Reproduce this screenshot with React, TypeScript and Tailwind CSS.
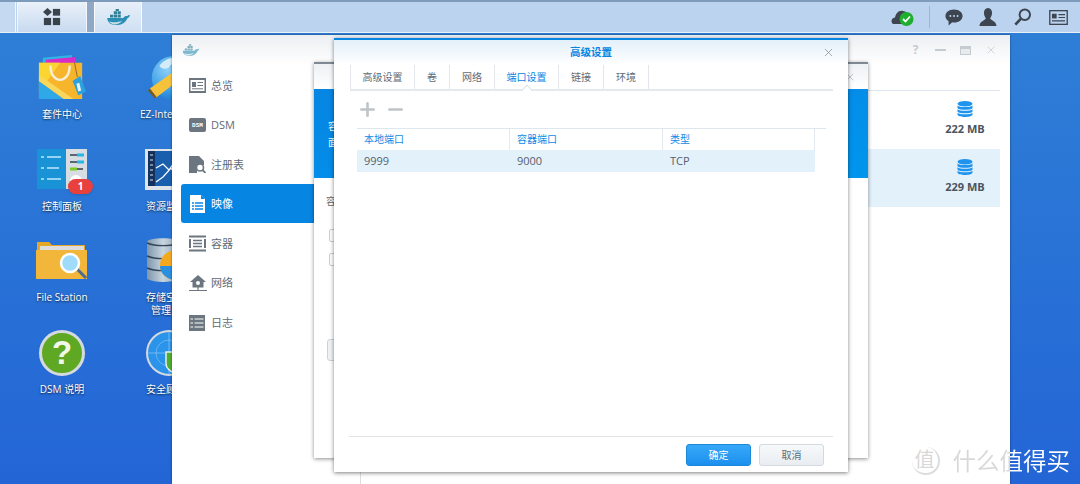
import { Minus, Plus, X } from "lucide-react";
import type { ReactNode } from "react";

function Whale({ className }: { className?: string }) {
  return (
    <svg viewBox="0 0 26 18" className={className}>
      <path d="M1 9.500h17c1-2 3-2.500 4.500-2 .5-1 1.500-1.500 2.500-1-.3 1.500-1 2.500-2.500 3.200C20.500 14.500 16 17 10.500 17 4.500 17 1.500 14 1 9.500z" fill="#2b8fb5" />
      <path d="M3 13c3 1.500 9 1.500 14-.5-2.500 3-6 4-9 3.800-2-.3-4-1.500-5-3.300z" fill="#c9dfe6" />
      <path d="M4 6h3.400v3H4zM8 6h3.400v3H8zM12 6h3.400v3H12zM8 2.500h3.400v3H8zM12 2.500h3.400v3H12zM10 0h3.400v2.200H10z" fill="#2f7f96" />
    </svg>
  );
}

function BagIcon() {
  return (
    <svg viewBox="0 0 50 50" className="h-[48px] w-[48px]">
      <path d="M5 4l30-3 2 8H5z" fill="#32b5e5" />
      <path d="M8 6l31-3 1 7H8z" fill="#d82cc8" />
      <path d="M1 9h45v38H1z" fill="#f7b52c" />
      <path d="M1 9h22L1 40z" fill="#fbd532" />
      <path d="M1 47V28l26 19z" fill="#2fa8e8" />
      <path d="M27 47L1 28v-6l36 25z" fill="#f9d75c" />
      <path d="M13 12c0 20 20 20 20 0" fill="none" stroke="#f6eed8" strokeWidth="2.500" />
      <path d="M36 28l8-5 6 16-8 4z" fill="#2ba2df" />
      <path d="M40 31l3-1 2 8-3 1z" fill="#e6f4fb" />
      <path d="M38 9l3 15" stroke="#8a6a2c" strokeWidth="1" />
    </svg>
  );
}

function GlobeIcon() {
  return (
    <svg viewBox="0 0 50 50" className="ml-[8px] h-[48px] w-[48px]">
      <defs>
        <radialGradient id="globe" cx="0.35" cy="0.3" r="0.8">
          <stop offset="0" stopColor="#8fd0f6" />
          <stop offset="0.6" stopColor="#3a9ee8" />
          <stop offset="1" stopColor="#1670c4" />
        </radialGradient>
      </defs>
      <circle cx="29" cy="25" r="23" fill="url(#globe)" />
      <path d="M14 12c6-7 14-9 20-8-2 6-8 5-10 10-4 2-8 2-10-2zM32 36c4-2 10-2 13-1-3 6-8 10-13 11-2-4-2-7 0-10z" fill="#d2ecfa" />
      <path d="M4 36L42 9l6 8L11 45z" fill="#f5c33b" />
      <path d="M4 36l7 9-2 1-7-8z" fill="#7a5a1c" />
    </svg>
  );
}

function PanelIcon() {
  return (
    <svg viewBox="0 0 50 44" className="h-[44px] w-[50px]">
      <rect x="0" y="1" width="29" height="40" fill="#1a93d6" />
      <rect x="29" y="1" width="21" height="40" fill="#d7dde2" />
      <path d="M4 9h3M10 9h14M4 20h3M10 20h12M4 31h3M10 31h14" stroke="#bfe9fb" strokeWidth="1.500" />
      <path d="M33 7h13M33 14h13M33 21h13" stroke="#5c6670" strokeWidth="2" />
      <path d="M40 7h7M40 14h7" stroke="#25b7e8" strokeWidth="3" />
      <path d="M33 21h7" stroke="#7ecb2b" strokeWidth="3" />
      <circle cx="39" cy="33" r="6" fill="#fff" />
    </svg>
  );
}

function MonitorIcon() {
  return (
    <svg viewBox="0 0 50 44" className="ml-[8px] h-[44px] w-[50px]">
      <rect x="0" y="1" width="50" height="41" fill="#dfe4e8" />
      <rect x="3" y="3" width="44" height="35" fill="#1a5eae" />
      <rect x="3" y="3" width="7" height="35" fill="#12315c" />
      <path d="M5 7h3M5 12h3M5 17h3M5 22h3M5 27h3M5 32h3" stroke="#dfe4e8" strokeWidth="1" />
      <path d="M11 20l7-4 6 6 7-10 8 8 8-6M11 34l7-5 8-9 7 11 8-9 6 5" fill="none" stroke="#fff" strokeWidth="1.200" />
    </svg>
  );
}

function FolderIcon() {
  return (
    <svg viewBox="0 0 52 44" className="h-[44px] w-[52px]">
      <path d="M1 3h12l3 3h33v34H1z" fill="#e6a728" />
      <rect x="4" y="7" width="44" height="4" fill="#ddd" />
      <path d="M0 11h51v29H0z" fill="#f1b63a" />
      <path d="M40 29l10 10" stroke="#4b6d8f" strokeWidth="3" />
      <circle cx="34" cy="24" r="9" fill="#9fdcfb" stroke="#fff" strokeWidth="2.500" />
    </svg>
  );
}

function StorageIcon() {
  return (
    <svg viewBox="0 0 50 46" className="ml-[8px] h-[46px] w-[50px]">
      <defs>
        <linearGradient id="disk" x1="0" x2="1" y1="0" y2="0">
          <stop offset="0" stopColor="#7f97ab" />
          <stop offset="0.5" stopColor="#c7d5df" />
          <stop offset="1" stopColor="#8da3b5" />
        </linearGradient>
      </defs>
      <path d="M2 4c0-5 32-5 32 0v37c-8 4-24 4-32 0z" fill="url(#disk)" />
      <path d="M2 5c8 3.500 24 3.500 32 0M2 18c8 3.500 24 3.500 32 0M2 30c8 3.500 24 3.500 32 0" fill="none" stroke="#33475a" strokeWidth="1.400" />
      <path d="M15 27c0-8 6-14 15-15v15h17c0 10-8 15-16 15s-16-5-16-15z" fill="#f4a81e" />
      <path d="M15 28c0 7 6 13 15 14 9 1 15-5 17-14z" fill="#2b8fe0" />
    </svg>
  );
}

function HelpIcon() {
  return (
    <div className="flex h-[46px] w-[46px] items-center justify-center rounded-full border-[3px] border-[#d5dade] bg-[#5fa824] [font-family:'Liberation_Sans',sans-serif] text-[33px] leading-none font-bold text-[#f2f8e8]">
      ?
    </div>
  );
}

function ShieldIcon() {
  return (
    <svg viewBox="0 0 50 46" className="ml-[8px] h-[46px] w-[50px]">
      <circle cx="24" cy="23" r="22" fill="#2a93ea" stroke="#d5dade" strokeWidth="2" />
      <path d="M2 23h44M24 1v44" stroke="#9fd0f7" strokeWidth="0.600" />
      <circle cx="24" cy="23" r="13" fill="none" stroke="#9fd0f7" strokeWidth="0.500" />
      <path d="M21 22h24v12c-3 6-7 9-12 11-5-2-12-6-12-11z" fill="#4fae2e" stroke="#e8eef2" strokeWidth="1.500" />
    </svg>
  );
}

const desktopItems: { label: ReactNode; icon: ReactNode }[] = [
  { label: "套件中心", icon: <BagIcon /> },
  { label: "EZ-Internet", icon: <GlobeIcon /> },
  {
    label: "控制面板",
    icon: (
      <div className="relative">
        <PanelIcon />
        <span className="absolute top-[31px] left-[31px] flex h-[15px] w-[25px] items-center justify-center rounded-full bg-[#e8403d] text-[10px] font-bold text-white shadow">
          1
        </span>
      </div>
    ),
  },
  { label: "资源监控", icon: <MonitorIcon /> },
  { label: "File Station", icon: <FolderIcon /> },
  {
    label: (
      <>
        存储空间
        <br />
        管理员
      </>
    ),
    icon: <StorageIcon />,
  },
  { label: "DSM 说明", icon: <HelpIcon /> },
  { label: "安全顾问", icon: <ShieldIcon /> },
];

function DesktopIcons() {
  return (
    <div className="grid grid-cols-[104px_104px] auto-rows-[91.500px] pt-[53px] pl-[10px]">
      {desktopItems.map((item, i) => (
        <div key={i} className="flex flex-col items-center">
          <div className="flex h-[50px] items-center justify-center">{item.icon}</div>
          <div className="mt-[5px] whitespace-nowrap text-center text-[10px] leading-[13px] text-white [text-shadow:0_1px_2px_rgba(0,0,0,0.7)]">
            {item.label}
          </div>
        </div>
      ))}
    </div>
  );
}

function GridGlyph() {
  return (
    <svg viewBox="0 0 20 20" className="h-[18px] w-[18px]" fill="#3a434c">
      <path d="M5 0l5 4.500L5 9 0 4.500z" />
      <rect x="11" y="1" width="8" height="7.500" />
      <rect x="1" y="11" width="8" height="8" />
      <rect x="11" y="11" width="8" height="8" />
    </svg>
  );
}

function TaskbarIcons() {
  return (
    <div className="ml-auto flex items-center pr-[12px]">
      <svg viewBox="0 0 24 18" className="h-[18px] w-[24px]">
        <path d="M2 16c-2-1-2.500-6 2-6.500C5 5 8 2 12 3c3 .5 5 2 5.500 5L12 16z" fill="#3c4550" />
        <circle cx="15.500" cy="11" r="7" fill="#1fae2d" />
        <path d="M12 11l2.500 2.500 4.500-5" fill="none" stroke="#fff" strokeWidth="1.800" />
      </svg>
      <div className="mr-[15px] ml-[14px] h-[22px] w-px bg-[#9fb6d0]" />
      <svg viewBox="0 0 20 18" className="h-[17px] w-[18px]">
        <path d="M10 0c5.500 0 9.500 3.200 9.500 7.300s-4 7.300-9.500 7.300c-1 0-1.500 0-2-.2L4 18v-4.800C2 12 .5 9.800.5 7.300.5 3.200 4.500 0 10 0z" fill="#3c4550" />
        <circle cx="6" cy="7.300" r="1.100" fill="#bcd3ef" />
        <circle cx="10" cy="7.300" r="1.100" fill="#bcd3ef" />
        <circle cx="14" cy="7.300" r="1.100" fill="#bcd3ef" />
      </svg>
      <svg viewBox="0 0 20 20" className="ml-[16px] h-[18px] w-[18px]" fill="#3c4550">
        <path d="M10 0c3 0 4.500 2.500 4.500 5.500S13 10 12.500 11.500c0 2 6.500 3 7 8.500H.5c.5-5.500 7-6.500 7-8.500C7 10 5.500 8.500 5.500 5.500S7 0 10 0z" />
      </svg>
      <svg viewBox="0 0 20 20" className="ml-[17px] h-[18px] w-[18px]" fill="none" stroke="#3c4550">
        <circle cx="12" cy="7.500" r="5.800" strokeWidth="2.200" />
        <path d="M7.500 12L1.500 18.500" strokeWidth="3" />
      </svg>
      <svg viewBox="0 0 20 16" className="ml-[17px] h-[15px] w-[19px]">
        <rect x="0.700" y="0.700" width="18.600" height="14.600" fill="none" stroke="#3c4550" strokeWidth="1.400" />
        <rect x="3" y="4" width="5" height="5" fill="#3c4550" />
        <path d="M10 5h7M10 8h7M3 11.500h14" stroke="#3c4550" strokeWidth="1.300" />
      </svg>
    </div>
  );
}

function Taskbar() {
  return (
    <div className="absolute top-0 left-0 z-30 flex h-[33px] w-full border-t-2 border-b border-t-[#7f9bbb] border-b-[#e8f0f8] bg-[#bcd3ef]">
      <div className="w-[16px] border-r border-white/80 bg-[#c5d9f0]" />
      <div className="ml-[1px] flex w-[70px] items-center justify-center border-x border-white/70 bg-gradient-to-b from-[#eaf1f9] to-[#c8daf0]">
        <GridGlyph />
      </div>
      <div className="w-[7px] bg-[#8fa8c6]" />
      <div className="flex w-[48px] items-center justify-center border-x border-white/80 bg-gradient-to-b from-[#e7eff8] to-[#cfe0f3]">
        <Whale className="h-[17px] w-[25px]" />
      </div>
      <TaskbarIcons />
    </div>
  );
}

const iconClass = "h-[17px] w-[17px]";

function IdCard({ color }: { color: string }) {
  return (
    <svg viewBox="0 0 17 15" className={iconClass}>
      <path d="M0 0h17v15H0zM1.500 2v11h14V2z" fill={color} />
      <rect x="3" y="4" width="4" height="5" fill={color} />
      <path d="M8.500 4.500H14M8.500 7.500H14M3 10.800h11" stroke={color} />
    </svg>
  );
}

function DsmGlyph() {
  return (
    <div className="flex h-[14px] w-[17px] items-center justify-center rounded-[2px] bg-[#6c7680] [font-family:'Liberation_Mono',monospace] text-[6px] font-bold text-white">
      DSM
    </div>
  );
}

function RegistryGlyph() {
  return (
    <svg viewBox="0 0 17 17" className={iconClass}>
      <path d="M0 0h10l5 5v4H8v8H0z" fill="#6c7680" />
      <circle cx="11" cy="11.500" r="3.500" fill="#fff" stroke="#6c7680" strokeWidth="1.600" />
      <path d="M13.500 14l3 3" stroke="#6c7680" strokeWidth="1.800" />
    </svg>
  );
}

function ImageGlyph() {
  return (
    <svg viewBox="0 0 17 18" className="h-[18px] w-[17px]">
      <path d="M1 0h11l4 4v14H1z" fill="#fff" />
      <path d="M12 0v4h4" fill="#0785e3" />
      <path d="M3 8h2M6 8h8M3 11h2M6 11h8M3 14h2M6 14h8" stroke="#0785e3" strokeWidth="1.600" />
    </svg>
  );
}

function ContainerGlyph() {
  return (
    <svg viewBox="0 0 17 16" className={iconClass}>
      <path d="M0 0h17v2H0zM0 14h17v2H0zM0 3.500h2v9H0zM15 3.500h2v9h-2z" fill="#6c7680" />
      <path d="M4 5h9M4 8h9M4 11h9" stroke="#6c7680" strokeWidth="1.400" />
    </svg>
  );
}

function NetworkGlyph() {
  return (
    <svg viewBox="0 0 18 17" className="h-[17px] w-[18px]">
      <path d="M9 0l8 7h-2.500v5.500h-11V7H1z" fill="#6c7680" />
      <circle cx="9" cy="8" r="2" fill="#fff" />
      <path d="M9 12v3M0 15.500h6M12 15.500h6M6 15.500h6" stroke="#6c7680" strokeWidth="1.200" />
    </svg>
  );
}

function LogGlyph() {
  return (
    <svg viewBox="0 0 16 16" className="h-[16px] w-[16px]">
      <rect width="16" height="16" fill="#6c7680" />
      <path d="M1.500 4h2.500M5.500 4h9M1.500 8h2.500M5.500 8h9M1.500 12h2.500M5.500 12h9" stroke="#fff" strokeWidth="1" />
    </svg>
  );
}

const navItems: { label: string; icon: ReactNode }[] = [
  { label: "总览", icon: <IdCard color="#6c7680" /> },
  { label: "DSM", icon: <DsmGlyph /> },
  { label: "注册表", icon: <RegistryGlyph /> },
  { label: "映像", icon: <ImageGlyph /> },
  { label: "容器", icon: <ContainerGlyph /> },
  { label: "网络", icon: <NetworkGlyph /> },
  { label: "日志", icon: <LogGlyph /> },
];

function Sidebar() {
  return (
    <div className="w-[142px] shrink-0 pl-[9px]">
      {navItems.map((item) => {
        const active = item.label === "映像";
        return (
          <div
            key={item.label}
            className={
              active
                ? "flex h-[39.500px] items-center rounded-l-[3px] bg-[#0785e3] pt-[2px] pl-[8px] text-white"
                : "flex h-[39.500px] items-center pt-[2px] pl-[8px] text-[#5f6b76]"
            }
          >
            <div className="flex w-[22px] justify-start">{item.icon}</div>
            <span className="text-[11px]">{item.label}</span>
          </div>
        );
      })}
    </div>
  );
}

function DbIcon() {
  return (
    <svg viewBox="0 0 16 16" className="h-[16px] w-[16px]" fill="#1f94ee">
      <ellipse cx="8" cy="2.800" rx="7.500" ry="2.800" />
      <path d="M.5 4.600c2 2 13 2 15 0v2.600c-2 2-13 2-15 0zM.5 8.200c2 2 13 2 15 0v2.600c-2 2-13 2-15 0zM.5 11.800c2 2 13 2 15 0v1.400C15.500 15 12 16 8 16s-7.500-1-7.500-2.800z" />
    </svg>
  );
}

function SizeRow({ size, selected }: { size: string; selected?: boolean }) {
  return (
    <div className={selected ? "flex h-[58px] justify-end bg-[#e3f1fb]" : "flex h-[58px] justify-end"}>
      <div className="flex w-[70px] flex-col items-center pt-[10px]">
        <DbIcon />
        <span className="mt-[4px] text-[11px] font-bold text-[#4a5560]">{size}</span>
      </div>
    </div>
  );
}

function WindowControls() {
  return (
    <div className="ml-auto flex items-center gap-[14px] pr-[13px] text-[#c4cbd1]">
      <span className="w-[11px] text-center text-[12px] leading-none font-bold">?</span>
      <div className="h-[2px] w-[11px] bg-[#c4cbd1]" />
      <div className="h-[9px] w-[11px] border border-t-[3px] border-[#c4cbd1] bg-[#e8ebee]" />
      <X size={12} strokeWidth={1.500} />
    </div>
  );
}

function MainWindow() {
  return (
    <div className="absolute top-[35px] left-[172px] z-10 flex h-[449px] w-[838px] flex-col bg-white shadow-[0_0_2px_rgba(0,0,0,0.5)]">
      <div className="flex h-[30px] shrink-0 items-center bg-gradient-to-b from-[#eceff2] to-white pl-[10px]">
        <Whale className="h-[13px] w-[18px] opacity-60" />
        <WindowControls />
      </div>
      <div className="flex min-h-0 flex-1">
        <Sidebar />
        <div className="relative flex flex-1 flex-col pr-[10px]">
          <div className="mt-[25px] border-t border-[#dde6ee]">
            <SizeRow size="222 MB" />
            <SizeRow size="229 MB" selected />
          </div>
          <div className="mt-auto ml-[46px] h-[14px] w-px bg-[#dcdfe2]" />
        </div>
      </div>
    </div>
  );
}

function BackDialog() {
  return (
    <div className="absolute top-[62px] left-[314px] z-20 flex h-[396px] w-[554px] flex-col border-t-2 border-t-[#7f8a94] bg-white shadow-[0_1px_4px_rgba(0,0,0,0.45)]">
      <div className="flex h-[25px] shrink-0 items-center justify-end bg-gradient-to-b from-[#eef1f4] to-white pr-[12px]">
        <X size={12} className="text-[#c0c7cd]" />
      </div>
      <div className="flex h-[89px] shrink-0 flex-col justify-center bg-gradient-to-br from-[#0785e3] to-[#0096ee] pl-[14px] text-[10px] leading-[16px] text-white">
        <span>容</span>
        <span>面</span>
      </div>
      <div className="pt-[16px] pl-[12px] text-[10px] text-[#5f6b76]">容</div>
      <div className="mt-[20px] ml-[15px] h-[13px] w-[13px] rounded-[2px] border border-[#c8d0d7]" />
      <div className="mt-[11px] ml-[15px] h-[13px] w-[13px] rounded-[2px] border border-[#c8d0d7]" />
      <div className="mt-[73px] ml-[13px] h-[22px] w-[60px] rounded-[3px] border border-[#ccd4db] bg-[#f0f3f6]" />
    </div>
  );
}

const tabs = [
  { label: "高级设置", width: "w-[64px]" },
  { label: "卷", width: "w-[35px]" },
  { label: "网络", width: "w-[45px]" },
  { label: "端口设置", width: "w-[64px]", active: true },
  { label: "链接", width: "w-[45px]" },
  { label: "环境", width: "w-[45px]" },
];

function Tabs() {
  return (
    <div className="relative mr-[15px] ml-[16px] flex h-[26px] shrink-0 border-b-2 border-[#e6e9ec]">
      {tabs.map((tab) => (
        <div
          key={tab.label}
          className={
            tab.active
              ? "relative flex h-[24px] items-center justify-center border-l border-[#e3e7eb] text-[10px] text-[#0785e3] " + tab.width
              : "flex h-[24px] items-center justify-center border-l border-[#e3e7eb] text-[10px] text-[#5f6b76] " + tab.width
          }
        >
          {tab.label}
          {tab.active && (
            <span className="absolute -bottom-[4px] left-1/2 h-[7px] w-[7px] -translate-x-1/2 rotate-45 border-t border-l border-[#dfe3e7] bg-white" />
          )}
        </div>
      ))}
      <div className="h-[24px] border-l border-[#e3e7eb]" />
    </div>
  );
}

function PortTable() {
  return (
    <div className="mr-[22px] ml-[23px]">
      <div className="grid h-[22px] grid-cols-[153px_153px_152px_10px] border-t border-[#dfe7ee] text-[10px] text-[#0f8ae6]">
        <div className="flex items-center border-r border-[#e3e9ef] pl-[7px]">本地端口</div>
        <div className="flex items-center border-r border-[#e3e9ef] pl-[7px]">容器端口</div>
        <div className="flex items-center border-r border-[#e3e9ef] pl-[7px]">类型</div>
        <div />
      </div>
      <div className="grid h-[22px] w-[458px] grid-cols-[153px_153px_152px] items-center bg-[#e3f1fb] text-[11px] text-[#56616c]">
        <div className="pl-[7px]">9999</div>
        <div className="pl-[7px]">9000</div>
        <div className="pl-[7px]">TCP</div>
      </div>
    </div>
  );
}

function PortDialog() {
  return (
    <div className="absolute top-[38px] left-[334px] z-30 flex h-[434px] w-[514px] flex-col border-t-2 border-t-[#0785e3] bg-white shadow-[0_1px_4px_rgba(0,0,0,0.5)]">
      <div className="flex h-[25px] shrink-0 items-center bg-gradient-to-b from-[#e3f0fa] to-white">
        <div className="relative flex-1 text-center text-[10.500px] font-bold text-[#0785e3]">
          高级设置
          <X size={13} strokeWidth={1.300} className="absolute top-[1px] right-[13px] text-[#7c8791]" />
        </div>
      </div>
      <Tabs />
      <div className="flex h-[37px] shrink-0 items-center gap-[7px] pl-[23px] text-[#c0c4c8]">
        <Plus size={21} strokeWidth={3} />
        <Minus size={21} strokeWidth={3} />
      </div>
      <PortTable />
      <div className="mx-[15px] mt-auto flex h-[36px] shrink-0 items-start justify-end gap-[8px] border-t border-[#e2e5e8] pt-[7px] pr-[9px]">
        <button className="h-[22px] w-[65px] rounded-[3px] border border-[#1b88d8] bg-gradient-to-b from-[#37a8f8] to-[#1a90ee] text-[10px] text-white">
          确定
        </button>
        <button className="h-[22px] w-[65px] rounded-[3px] border border-[#d2d9df] bg-gradient-to-b from-[#f7f9fa] to-[#e9edf1] text-[10px] text-[#5f6b76]">
          取消
        </button>
      </div>
    </div>
  );
}

function Watermark() {
  return (
    <div className="absolute right-[10px] bottom-[9px] z-40 flex items-center">
      <div className="mr-[13px] flex h-[28px] w-[28px] items-center justify-center rounded-full border-r-2 border-b-2 border-[#dcdcdc] text-[20px] leading-none text-[#d8d8d8]">
        值
      </div>
      <span className="bg-[linear-gradient(90deg,#d8d8d8_57px,#ffffff_57px)] bg-clip-text text-[23.500px] leading-[28px] text-transparent">
        什么值得买
      </span>
    </div>
  );
}

export default function App() {
  return (
    <div className="relative h-[484px] w-[1080px] overflow-hidden bg-gradient-to-b from-[#2f80d6] to-[#2465d6] [font-family:'Open_Sans','Noto_Sans_CJK_SC',sans-serif]">
      <Taskbar />
      <DesktopIcons />
      <MainWindow />
      <BackDialog />
      <PortDialog />
      <Watermark />
    </div>
  );
}
